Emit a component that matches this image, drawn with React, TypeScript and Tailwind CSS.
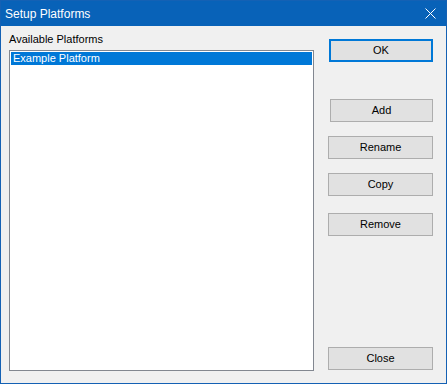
const buttonClass =
    'flex h-[23px] items-center justify-center border border-[#adadad] bg-[#e1e1e1] text-[11px] text-black';

function CloseGlyph() {
    return (
        <svg width="11" height="11" viewBox="0 0 11 11" className="block">
            <path d="M0.5 0.5 L10.5 10.5 M10.5 0.5 L0.5 10.5" stroke="#ffffff" strokeWidth="1" />
        </svg>
    );
}

export default function App() {
    return (
        <div
            className="flex h-[384px] w-[447px] flex-col border border-[#1461b4] bg-[#f0f0f0]"
            style={{ fontFamily: '"Liberation Sans", Arial, sans-serif' }}
        >
            <div className="flex h-[25px] shrink-0 items-center justify-between bg-[#0862b8] pl-[4px] pr-[10px]">
                <span className="text-[12px] text-white">Setup Platforms</span>
                <CloseGlyph />
            </div>

            <div className="flex min-h-0 flex-1 pb-[12px] pl-[8px] pr-[13px] pt-[7px]">
                <div className="flex w-[305px] flex-col">
                    <div className="h-[13px] text-[11px] leading-[13px] text-black">Available Platforms</div>
                    <div className="mt-[4px] flex-1 border border-[#828790] bg-white p-[1px]">
                        <div className="h-[13px] bg-[#0078d7] pl-[2px] text-[11px] leading-[13px] text-white">
                            Example Platform
                        </div>
                    </div>
                </div>

                <div className="ml-[14px] flex w-[105px] flex-col pb-[1px] pt-[6px]">
                    <button className="ml-[1px] flex h-[23px] w-[104px] items-center justify-center border-2 border-[#0078d7] bg-[#e1e1e1] text-[11px] text-black">
                        OK
                    </button>
                    <button className={`${buttonClass} ml-[2px] mt-[37px] w-[103px]`}>Add</button>
                    <button className={`${buttonClass} mt-[14px] w-[105px]`}>Rename</button>
                    <button className={`${buttonClass} mt-[14px] w-[105px]`}>Copy</button>
                    <button className={`${buttonClass} mt-[17px] w-[105px]`}>Remove</button>
                    <button className={`${buttonClass} mt-auto w-[105px]`}>Close</button>
                </div>
            </div>
        </div>
    );
}
